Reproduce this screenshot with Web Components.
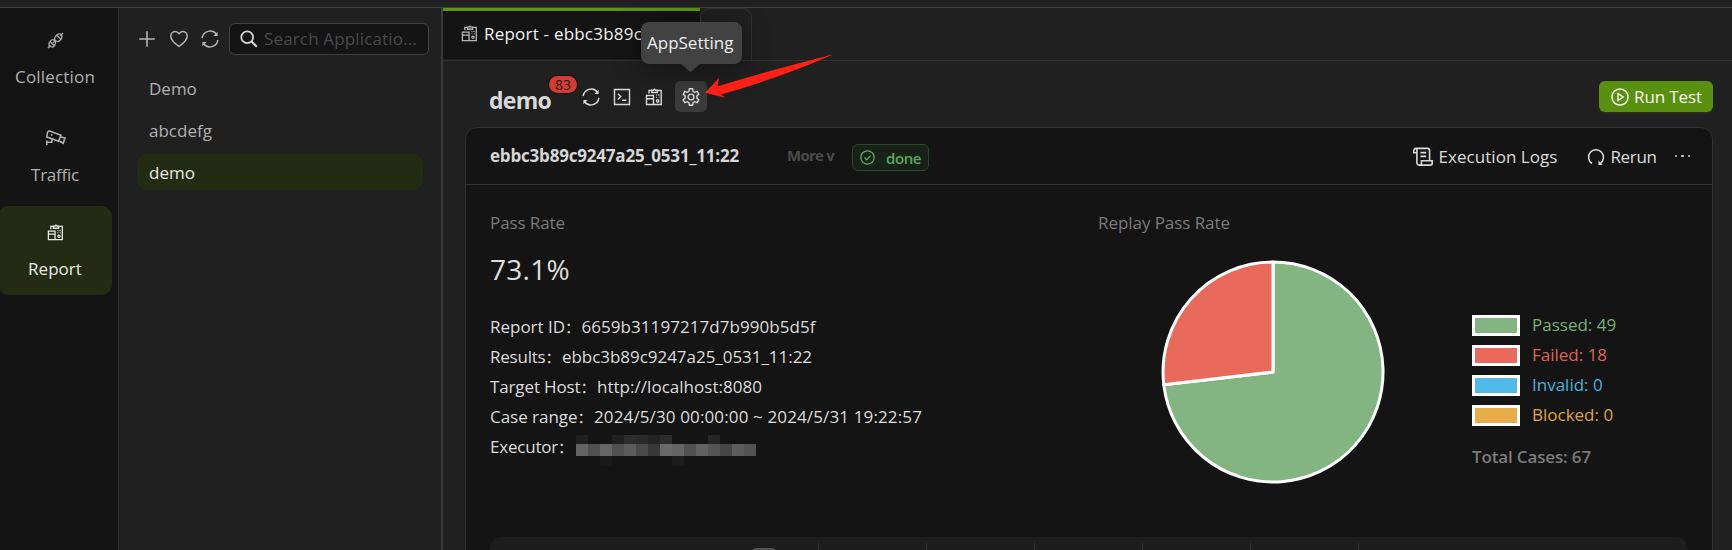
<!DOCTYPE html>
<html lang="en">
<head>
<meta charset="utf-8">
<title>Report</title>
<style>
html,body{margin:0;height:100%;overflow:hidden;background:#202020}
body{font:17px "Open Sans","Noto Sans CJK SC",sans-serif;color:#dcdcdc}
</style>
</head>
<body>
<app-shell></app-shell>
<script>
const define = (name, css, html, after) => customElements.define(name, class extends HTMLElement {
  constructor() {
    super();
    this.attachShadow({ mode: 'open' });
  }
  connectedCallback() {
    if (this.shadowRoot.childNodes.length) return;
    const t = document.createElement('template');
    t.innerHTML = `<style>*{box-sizing:border-box}${css}</style>` + (typeof html === 'function' ? html(this) : html);
    this.shadowRoot.append(t.content.cloneNode(true));
    if (after) after(this);
  }
});

const ICONS = {
  plug: '<g stroke-width="1.3"><path d="M1 17l3-3M14 4l3-3M10.2 3.2l4.6 4.6c1.2-1.6 1.5-3.6.2-5s-3.300-1-4.800.4zM3.200 10.200l4.600 4.600c-1.600 1.300-3.600 1.500-4.900.2s-1-3.300.3-4.800zM10.200 3.200L8.500 5.300c-1 1.500-.6 2.700.5 3.800s2.700 1.200 3.900.5l1.900-1.800M3.200 10.200l1.500-1.600c1.200-.8 2.400-.6 3.500.5s1.300 2.500.5 3.700l-.9 2M6 12l2-2"/></g>',
  camera: '<g stroke-width="1.700"><path d="M2.800 1l12 4.500-2.600 6.300L-.2 7.300.5 3C.9 1.500 1.700.8 2.800 1z"/><path d="M14.800 7.500l4.200 1-2 5.500-3.700-2.300M2.500 8.500l3.200 1.200-.8 3.300H-.2M-.2 11v5"/></g><circle cx="4.900" cy="5.200" r="1" fill="currentColor" stroke="none"/>',
  report: '<g stroke-width="1.4"><path d="M4 5.500V2.500h3M12 2.500h4.200v14H8.800"/><path d="M6.800 4.500V2.200h1.700a1 1 0 0 1 2 0h1.800v2.300zM1.500 7.500h7v9h-7zM1.500 10.700h7"/></g><path d="M11 7h1.200M13.500 7h1M11 9.300h1M13.500 9.300h1M13.500 6.500v1" stroke-width="1"/><circle cx="12.700" cy="12.900" r="1.200" stroke-width="1.300"/>',
  plus: '<path d="M9 1.200v15.600M1.200 9h15.600" stroke-width="1.600"/>',
  heart: '<path d="M9 16.500C3.500 12.500.8 9.500.8 6.200.8 3.500 2.700 1.500 5.100 1.500c1.600 0 3 .8 3.900 2.200.9-1.400 2.300-2.200 3.900-2.200 2.400 0 4.300 2 4.300 4.700 0 3.300-2.700 6.300-8.200 10.300z" stroke-width="1.500"/>',
  sync: '<g stroke-width="1.400"><path d="M1.200 8.200a8 8 0 0 1 14.300-4M16.800 9.800a8 8 0 0 1-14.300 4"/></g><path d="M16.600 1.700v4.300h-4.300zM1.400 16.300V12h4.300z" fill="currentColor" stroke="none"/>',
  search: '<circle cx="7.200" cy="7.200" r="5.900" stroke-width="1.700"/><path d="M11.500 11.500l5.300 5.300" stroke-width="2"/>',
  console: '<g stroke-width="1.400"><path d="M1.500 1.500h15v15h-15z"/><path d="M4.800 5.700l3 2.900-3 2.900M9 12.200h4.300"/></g>',
  gear: '<g stroke-width="1.400"><circle cx="9" cy="9" r="2.900"/><path d="M7.400.8h3.200l.5 2.500 1.700 1 2.400-.9 1.600 2.800-1.900 1.700v2.200l1.900 1.700-1.600 2.800-2.400-.9-1.700 1-.5 2.500H7.400l-.5-2.500-1.700-1-2.400.9-1.600-2.800 1.900-1.700V7.900L1.200 6.200l1.600-2.800 2.400.9 1.700-1z"/></g>',
  play: '<circle cx="9" cy="9" r="8.100" stroke-width="1.500"/><path d="M7 5.500l5.200 3.500L7 12.500z" stroke-width="1.400"/>',
  logs: '<g stroke-width="1.500"><path d="M3.700 5.500H.8V3.200a1.900 1.900 0 0 1 1.900-1.900h11a2 2 0 0 1 2 2v9.500M3.700 5.500V3.200a1.400 1.400 0 0 0-1.400-1.500M3.700 5.500v9.500a2.200 2.200 0 0 0 2.200 2.200h10.500a1.800 1.800 0 0 0 1.800-1.800v-2.300H8v2.300a2 2 0 0 1-2 1.900M7 5.300h5.500M7 8.900h5.500"/></g>',
  rerun: '<g stroke-width="1.500"><path d="M5 15.500A7.500 7.500 0 1 1 13.200 15.400"/></g><path d="M11.500 12.500v4.500h4.200z" fill="currentColor" stroke="none"/>',
  check: '<circle cx="9" cy="9" r="8" stroke-width="1.500"/><path d="M5.500 9l2.600 2.700 4.600-5" stroke-width="1.500"/>'
};
define('ui-icon', ':host{display:block;flex:none}svg{display:block;overflow:visible}',
  e => { const s = e.getAttribute('size') || 18;
    return `<svg width="${s}" height="${s}" viewBox="0 0 18 18" fill="none" stroke="currentColor">${ICONS[e.getAttribute('name')]}</svg>`; });

/* A single line of text, tracked so that it fills the given width. */
define('ui-text', ':host{display:block;flex:none;white-space:nowrap;line-height:24px}span{display:inline-block}', '<span><slot></slot></span>', e => {
  const w = +e.getAttribute('w');
  if (!w) return;
  const s = e.shadowRoot.querySelector('span');
  e.style.width = w + 'px';
  s.style.letterSpacing = (w - s.getBoundingClientRect().width) / [...e.textContent].length + 'px';
});

define('rail-item', `:host{display:flex;flex-direction:column;align-items:center;height:89px;width:114px;margin-left:-2px;padding:18px 0 0 0;color:#b0b0b0;border-radius:11px;flex:none}
:host([active]){background:#232c12;color:#e8e8e8}
ui-icon{height:18px;margin-bottom:15px}`,
  e => `<ui-icon name="${e.getAttribute('icon')}" size="17"></ui-icon><ui-text w="${e.getAttribute('w')}">${e.getAttribute('label')}</ui-text>`);

define('side-rail', ':host{display:flex;flex-direction:column;gap:7px;width:119px;padding-top:6px;background:#141414;border-right:1px solid #303030}',
  `<rail-item icon="plug" label="Collection" w="80"></rail-item>
   <rail-item icon="camera" label="Traffic" w="48" style="margin-top:2px;margin-bottom:-2px"></rail-item>
   <rail-item icon="report" label="Report" w="54" active></rail-item>`);

define('app-item', `:host{display:flex;align-items:center;height:36px;padding:1px 0 0 12px;color:#b0b0b0;border-radius:10px}
:host([active]){background:#232c12;color:#e8e8e8}`,
  e => `<ui-text w="${e.getAttribute('w')}"><slot></slot></ui-text>`);

define('app-list', `:host{display:flex;flex-direction:column;width:322px;padding:15px 12px 0 18px}
.tools{display:flex;align-items:center;height:32px;color:#b5b5b5}
.search{display:flex;align-items:center;width:200px;height:32px;margin-left:auto;padding:0 0 0 10px;gap:6px;background:#141414;border:1px solid #424242;border-radius:6px;color:#4a4a4a}
.search ui-icon{color:#d8d8d8}
.list{display:flex;flex-direction:column;gap:6px;margin:15px 6px 0 0}`,
  `<div class="tools"><ui-icon name="plus" style="margin-left:1px"></ui-icon><ui-icon name="heart" style="margin-left:14px"></ui-icon><ui-icon name="sync" style="margin-left:13px"></ui-icon>
   <div class="search"><ui-icon name="search"></ui-icon><ui-text w="153">Search Applicatio...</ui-text></div></div>
   <div class="list"><app-item w="49">Demo</app-item><app-item w="65">abcdefg</app-item><app-item w="47" active>demo</app-item></div>`);

define('tab-bar', `:host{display:flex;height:53px;border-bottom:1px solid #303030}
.tab{display:flex;align-items:center;width:257px;height:51px;border-top:3px solid #5a9410;padding-left:18px;padding-bottom:3px;gap:6px;background:#141414;color:#f2f2f2}
.tab ui-icon{color:#b5b5b5}
.add{width:52px;height:52px;border:1px solid #303030;border-bottom:0;border-radius:10px 10px 0 0}`,
  `<div class="tab"><ui-icon name="report" size="17"></ui-icon><ui-text w="158">Report - ebbc3b89c</ui-text></div><div class="add"></div>`);

define('tool-tip', `:host{display:block;position:absolute;left:-34px;bottom:calc(100% + 17px);width:101px;height:42px;padding:9px 0 0 6px;background:#424242;color:#ededed;border-radius:8px;box-shadow:0 5px 28px #0006;z-index:2}
:host::after{content:"";position:absolute;left:39px;top:41px;width:21px;height:9px;background:#424242;clip-path:polygon(0 0,100% 0,55% 92%,50% 100%,45% 92%)}`,
  '<ui-text w="89"><slot></slot></ui-text>');

define('red-arrow', ':host{position:absolute;left:705px;top:54px;z-index:3}svg{display:block}',
  '<svg width="130" height="46"><path d="M0 38.700L14 24l-1.300 8.300Q70 15 128.500.2 76 23.500 16 40.500l4.200 3.300z" fill="#ff2015"/></svg>');

define('page-header', `:host{display:flex;height:66px;padding:0 19px 0 46px;color:#d9d9d9}
.name{margin-top:24px;font:700 23px "Open Sans",sans-serif}
.badge{display:flex;align-items:center;justify-content:center;width:28px;height:17px;margin:15px 0 0 -2px;border-radius:9px;background:#d63c33;color:#2b1413;font-size:14px;box-shadow:0 0 0 1px #111}
.icons{display:flex;margin:20px 0 0 5px;height:32px;align-items:center}
.set{position:relative;display:flex;align-items:center;justify-content:center;width:32px;height:31px;border-radius:5px;background:#3a3a3a;margin:-1px 0 0 12px}
button{display:flex;align-items:center;width:114px;height:31px;margin:20px 0 0 auto;padding:1px 0 0 12px;border:0;border-radius:6px;background:#5a9010;color:#f5f8f0;font:inherit;gap:5px;box-shadow:0 2px 0 #252d18}`,
  `<ui-text class="name" w="62" style="font-size:23px;line-height:30px">demo</ui-text><div class="badge"><ui-text w="16">83</ui-text></div>
   <div class="icons"><ui-icon name="sync" ></ui-icon><ui-icon name="console" style="margin-left:13px"></ui-icon><ui-icon name="report" style="margin-left:14px"></ui-icon>
   <div class="set"><ui-icon name="gear"></ui-icon><tool-tip>AppSetting</tool-tip></div></div>
   <button><ui-icon name="play"></ui-icon><ui-text w="68">Run Test</ui-text></button>`);

define('card-title', `:host{display:flex;height:57px;border-bottom:1px solid #303030;padding:0 22px 0 24px;align-items:center}
.t{font-weight:700;color:#d6d6d6;margin-bottom:1px}.more{font-weight:700;font-size:15px;color:#4b4b4b;margin:0 0 3px 48px}
.tag{display:flex;align-items:center;width:77px;height:27px;margin:3px 0 0 18px;padding-left:7px;gap:11px;border:1px solid #274a2a;border-radius:6px;background:#172118;color:#5aa85c;font-weight:600;font-size:15px}
.act{display:flex;align-items:center;gap:7px;padding-top:1px}.r{margin-left:auto}
.dots{display:flex;gap:4px;margin-left:18px}.dots i{width:2.500px;height:2.500px;border-radius:50%;background:#d0d0d0}`,
  `<ui-text class="t" w="249">ebbc3b89c9247a25_0531_11:22</ui-text><ui-text class="more" w="47">More v</ui-text>
   <div class="tag"><ui-icon name="check" size="15"></ui-icon><ui-text w="35">done</ui-text></div>
   <div class="act r"><ui-icon name="logs" size="19"></ui-icon><ui-text w="119">Execution Logs</ui-text></div>
   <div class="act" style="margin-left:29px;gap:6px"><ui-icon name="rerun" size="18"></ui-icon><ui-text w="46">Rerun</ui-text></div>
   <div class="dots"><i></i><i></i><i></i></div>`);

define('info-row', ':host{display:flex;height:30px;align-items:center}.c{width:16.500px;font-size:15px}', e =>
  `<ui-text w="${e.getAttribute('lw')}">${e.getAttribute('label')}</ui-text><ui-text class="c">：</ui-text><slot></slot>`);

/* Pixelated block that hides a private value. */
define('masked-value', ':host{display:block;width:192px;height:34px;margin-top:9px}', () => {
  const rows = [[0, 9, ['#1f1f1f', 0, 0, '#202020', '#2d2d2d', '#292929', '#242424', '#2d2d2d', 0, 0, 0, '#262626']],
    [9, 12, ['#636363', '#505050', '#656565', '#505050', '#5c5c5c', '#494949', '#383838', '#6a6a6a', '#646464', '#505050', '#616161', '#545454', '#454545', '#5c5c5c', '#525252']],
    [21, 10, [0, 0, '#181818', 0, 0, 0, 0, 0, '#1c1c1c']]];
  return `<svg width="192" height="34">${rows.map(([y, h, c]) => c.map((f, i) => f ? `<rect x="${1 + i * 12}" y="${y}" width="12" height="${h}" fill="${f}"/>` : '').join('')).join('')}</svg>`;
});

define('pass-summary', `:host{display:block;width:608px}.k{color:#7b7b7b}
.big{color:#dedede;margin:15px 0 24px}`,
  `<ui-text class="k" w="75">Pass Rate</ui-text><ui-text class="big" w="80" style="font-size:28px;line-height:38px">73.1%</ui-text>
   <info-row label="Report ID" lw="75"><ui-text w="234">6659b31197217d7b990b5d5f</ui-text></info-row>
   <info-row label="Results" lw="55.500"><ui-text w="250">ebbc3b89c9247a25_0531_11:22</ui-text></info-row>
   <info-row label="Target Host" lw="90.500"><ui-text w="165">http://localhost:8080</ui-text></info-row>
   <info-row label="Case range" lw="87.500"><ui-text w="328">2024/5/30 00:00:00 ~ 2024/5/31 19:22:57</ui-text></info-row>
   <info-row label="Executor" lw="68"><masked-value></masked-value></info-row>`);

define('legend-item', ':host{display:flex;align-items:center;height:30px;gap:12px;color:var(--c)}i{width:48px;height:21px;border:3px solid #fff;background:var(--f)}ui-text{margin-top:-1px}',
  e => `<i></i><ui-text w="${e.getAttribute('w')}"><slot></slot></ui-text>`);

define('pass-chart', `:host{display:block;flex:1}.k{color:#7b7b7b}
.row{display:flex;margin-left:63px}svg{display:block;margin-top:25px}
.legend{margin:75px 0 0 87px}.total{color:#7b7b7b;font-weight:600;margin-top:15px}`,
  `<ui-text class="k" w="132">Replay Pass Rate</ui-text>
   <div class="row"><svg width="224" height="224" viewBox="-112 -112 224 224"><g stroke="#fff" stroke-width="3" stroke-linejoin="round">
   <path d="M0 0V-110A110 110 0 1 1-109.200 12.800Z" fill="#82b582"/><path d="M0 0L-109.200 12.800A110 110 0 0 1 0-110Z" fill="#e96a5a"/></g></svg>
   <div class="legend"><legend-item w="81" style="--f:#82b582;--c:#7ab07a">Passed: 49</legend-item><legend-item w="74" style="--f:#e96a5a;--c:#df6455">Failed: 18</legend-item><legend-item w="71" style="--f:#50b9e8;--c:#4bb0dc">Invalid: 0</legend-item><legend-item w="82" style="--f:#e8ad4a;--c:#dfa545">Blocked: 0</legend-item>
   <ui-text class="total" w="119">Total Cases: 67</ui-text></div></div>`);

define('case-table', `:host{display:flex;height:60px;margin:0 24px;background:#1d1d1d;border-radius:12px 12px 0 0;padding-top:6px;overflow:hidden}
i{flex:none;width:108px;height:40px;border-right:1px solid #333}i:first-of-type{width:329px;display:flex;justify-content:flex-end;padding:5px 40px 0 0}
b{width:28px;height:14px;border-radius:7px;background:#555}`, '<i><b></b></i><i></i><i></i><i></i><i></i><i></i>');

define('report-card', `:host{display:flex;flex-direction:column;height:600px;margin:0 19px 0 22px;border:1px solid #303030;border-radius:12px;background:#141414}
.body{display:flex;height:352px;padding:26px 24px 0}`,
  '<card-title></card-title><div class="body"><pass-summary></pass-summary><pass-chart></pass-chart></div><case-table></case-table>');

define('report-page', ':host{display:block;flex:1;min-width:0;border-left:2px solid #3a3a3a}', '<tab-bar></tab-bar><page-header></page-header><report-card></report-card>');

define('app-shell', `:host{display:block;width:1732px;height:550px;overflow:hidden;position:relative;padding-top:7px;background:#202020}
.cols{display:flex;height:543px;border-top:1px solid #424242}`,
  '<div class="cols"><side-rail></side-rail><app-list></app-list><report-page></report-page></div><red-arrow></red-arrow>');
</script>
</body>
</html>
